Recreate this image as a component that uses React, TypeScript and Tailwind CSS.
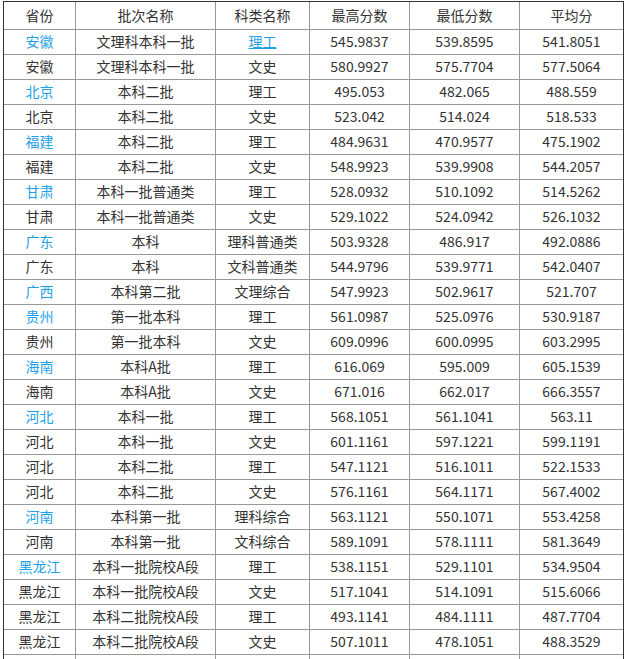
import React from "react";

type Row = {
  p: string;
  b: string;
  k: string;
  hi: string;
  lo: string;
  avg: string;
  blue?: boolean;
  kLink?: boolean;
};

const rows: Row[] = [
  { p: "安徽", b: "文理科本科一批", k: "理工", hi: "545.9837", lo: "539.8595", avg: "541.8051", blue: true, kLink: true },
  { p: "安徽", b: "文理科本科一批", k: "文史", hi: "580.9927", lo: "575.7704", avg: "577.5064" },
  { p: "北京", b: "本科二批", k: "理工", hi: "495.053", lo: "482.065", avg: "488.559", blue: true },
  { p: "北京", b: "本科二批", k: "文史", hi: "523.042", lo: "514.024", avg: "518.533" },
  { p: "福建", b: "本科二批", k: "理工", hi: "484.9631", lo: "470.9577", avg: "475.1902", blue: true },
  { p: "福建", b: "本科二批", k: "文史", hi: "548.9923", lo: "539.9908", avg: "544.2057" },
  { p: "甘肃", b: "本科一批普通类", k: "理工", hi: "528.0932", lo: "510.1092", avg: "514.5262", blue: true },
  { p: "甘肃", b: "本科一批普通类", k: "文史", hi: "529.1022", lo: "524.0942", avg: "526.1032" },
  { p: "广东", b: "本科", k: "理科普通类", hi: "503.9328", lo: "486.917", avg: "492.0886", blue: true },
  { p: "广东", b: "本科", k: "文科普通类", hi: "544.9796", lo: "539.9771", avg: "542.0407" },
  { p: "广西", b: "本科第二批", k: "文理综合", hi: "547.9923", lo: "502.9617", avg: "521.707", blue: true },
  { p: "贵州", b: "第一批本科", k: "理工", hi: "561.0987", lo: "525.0976", avg: "530.9187", blue: true },
  { p: "贵州", b: "第一批本科", k: "文史", hi: "609.0996", lo: "600.0995", avg: "603.2995" },
  { p: "海南", b: "本科A批", k: "理工", hi: "616.069", lo: "595.009", avg: "605.1539", blue: true },
  { p: "海南", b: "本科A批", k: "文史", hi: "671.016", lo: "662.017", avg: "666.3557" },
  { p: "河北", b: "本科一批", k: "理工", hi: "568.1051", lo: "561.1041", avg: "563.11", blue: true },
  { p: "河北", b: "本科一批", k: "文史", hi: "601.1161", lo: "597.1221", avg: "599.1191" },
  { p: "河北", b: "本科二批", k: "理工", hi: "547.1121", lo: "516.1011", avg: "522.1533" },
  { p: "河北", b: "本科二批", k: "文史", hi: "576.1161", lo: "564.1171", avg: "567.4002" },
  { p: "河南", b: "本科第一批", k: "理科综合", hi: "563.1121", lo: "550.1071", avg: "553.4258", blue: true },
  { p: "河南", b: "本科第一批", k: "文科综合", hi: "589.1091", lo: "578.1111", avg: "581.3649" },
  { p: "黑龙江", b: "本科一批院校A段", k: "理工", hi: "538.1151", lo: "529.1101", avg: "534.9504", blue: true },
  { p: "黑龙江", b: "本科一批院校A段", k: "文史", hi: "517.1041", lo: "514.1091", avg: "515.6066" },
  { p: "黑龙江", b: "本科二批院校A段", k: "理工", hi: "493.1141", lo: "484.1111", avg: "487.7704" },
  { p: "黑龙江", b: "本科二批院校A段", k: "文史", hi: "507.1011", lo: "478.1051", avg: "488.3529" },
];

const grid = "grid grid-cols-[72px_140px_94px_100px_110px_103px]";
const cell = "flex items-center justify-center pb-[1px] border-r border-[#999] last:border-r-0 whitespace-nowrap";

export default function App() {
  return (
    <div className="bg-white min-h-[659px]">
      <div
        className="ml-[3px] mt-[1px] w-[621px] border border-[#333] text-[14px] text-[#333]"
        style={{ fontFamily: '"Noto Sans CJK SC", "Noto Sans", sans-serif' }}
      >
        <div className={`${grid} h-[28px] border-b border-[#999]`}>
          {["省份", "批次名称", "科类名称", "最高分数", "最低分数", "平均分"].map((h) => (
            <div key={h} className={cell}>{h}</div>
          ))}
        </div>
        {rows.map((r, i) => (
          <div key={i} className={`${grid} h-[25px] border-b border-[#999]`}>
            <div className={`${cell} ${r.blue ? "text-[#1e9fe6]" : ""}`}>{r.p}</div>
            <div className={cell}>{r.b}</div>
            <div className={cell}>
              {r.kLink ? <span className="text-[#1e9fe6] underline underline-offset-1">{r.k}</span> : r.k}
            </div>
            <div className={cell}>{r.hi}</div>
            <div className={cell}>{r.lo}</div>
            <div className={cell}>{r.avg}</div>
          </div>
        ))}
        <div className={`${grid} h-[25px]`}>
          {[0, 1, 2, 3, 4, 5].map((c) => (
            <div key={c} className={cell} />
          ))}
        </div>
      </div>
    </div>
  );
}
